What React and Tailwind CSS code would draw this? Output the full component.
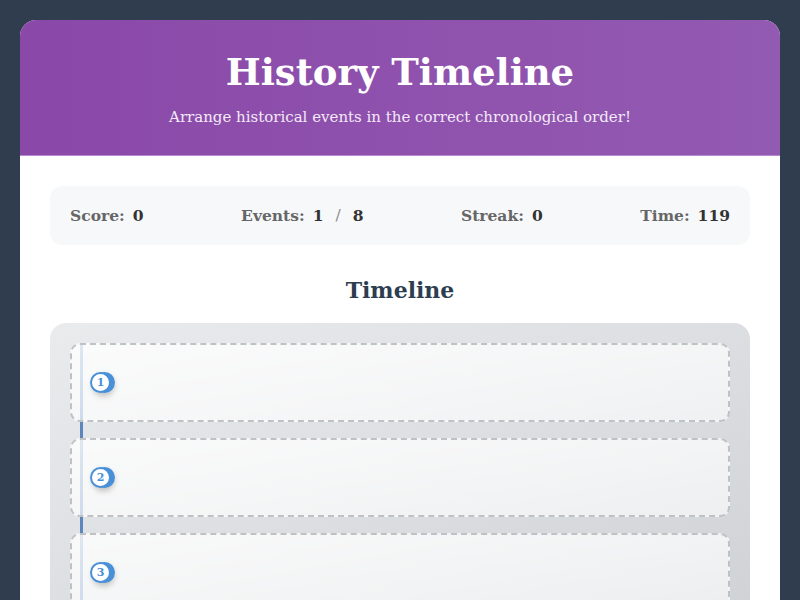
const stats = [
  { label: 'Score:', value: '0' },
  { label: 'Events:', value: '1', extra: '8' },
  { label: 'Streak:', value: '0' },
  { label: 'Time:', value: '119' },
];

const slots = [1, 2, 3];

function Slot({ n }) {
  return (
    <div className="relative flex h-[79px] items-center rounded-[10px] border-2 border-dashed border-[#bfc2c5] bg-gradient-to-br from-white/80 to-white/60 pl-[18px]">
      <div className="flex h-[21px] w-[21px] items-center justify-center rounded-full border-2 border-[#4a90d9] bg-white text-[11px] font-bold leading-none text-[#4a90d9] shadow-[4px_0_0_#4a90d9,3px_3px_6px_rgba(0,0,0,0.25)]">
        {n}
      </div>
    </div>
  );
}

export default function App() {
  return (
    <div className="min-h-screen bg-[#2f3d4e] px-5 pt-5 font-['DejaVu_Serif',serif]">
      <div className="overflow-hidden rounded-t-2xl bg-white">
        <header className="border-b border-[#b98ad0] bg-gradient-to-r from-[#8a48a8] to-[#935ab2] px-8 pb-[26px] pt-[29px] text-center text-white">
          <h1 className="text-[37px] font-bold leading-[46px]">History Timeline</h1>
          <p className="mt-[10px] text-[15px] leading-6 text-[#f3e9f8]">
            Arrange historical events in the correct chronological order!
          </p>
        </header>

        <main className="px-[30px] pt-[30px]">
          <div className="flex items-center justify-between rounded-xl bg-[#f7f8fa] px-5 py-5 text-[15.5px] font-bold leading-[19px]">
            {stats.map((s) => (
              <div key={s.label} className="flex items-center gap-2 text-[#666]">
                <span>{s.label}</span>
                <span className="text-[#333]">{s.value}</span>
                {s.extra && (
                  <>
                    <span className="px-1 font-normal text-[#888]">/</span>
                    <span className="text-[#333]">{s.extra}</span>
                  </>
                )}
              </div>
            ))}
          </div>

          <h2 className="mb-[18px] mt-[30px] text-center text-[22px] font-bold leading-[30px] text-[#2c3e50]">
            Timeline
          </h2>

          <div className="relative rounded-t-2xl bg-gradient-to-br from-[#e9ebed] to-[#cfd2d5] px-5 pb-5 pt-5">
            <div className="absolute bottom-0 left-[30px] top-5 w-[3px] bg-[#5b87bd]" />
            <div className="relative flex flex-col gap-4">
              {slots.map((n) => (
                <Slot key={n} n={n} />
              ))}
            </div>
          </div>
        </main>
      </div>
    </div>
  );
}
